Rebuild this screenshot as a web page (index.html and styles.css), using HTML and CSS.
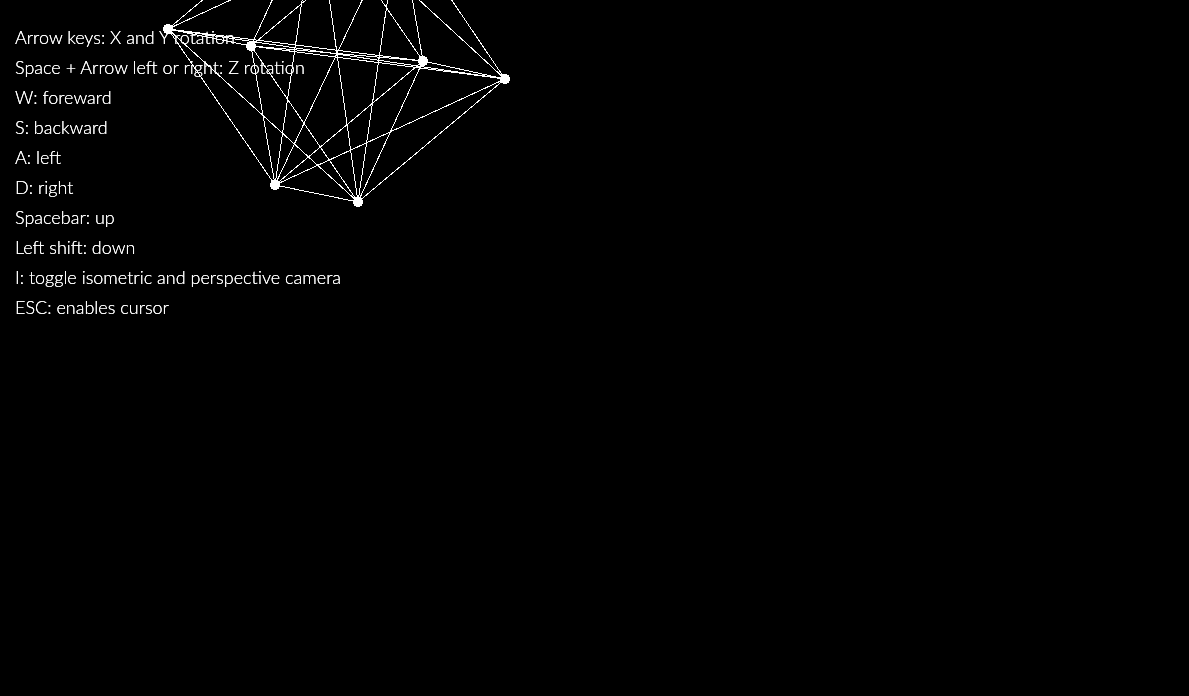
FILE: index.html
```html
<!DOCTYPE html>
<html lang="en">
<head>
<meta charset="utf-8">
<title>Polytope viewer</title>
<link rel="stylesheet" href="styles.css">
</head>
<body>
<main class="viewer">
  <svg class="scene" aria-hidden="true">
    <path class="edges" d="M168 29L251 46M168 29L423 61M168 29L505 79M168 29L275 185M168 29L358 202M168 29L316 -95M168 29L399 -78
      M251 46L423 61M251 46L505 79M251 46L275 185M251 46L358 202M251 46L316 -95M251 46L399 -78
      M423 61L505 79M423 61L275 185M423 61L358 202M423 61L316 -95M423 61L399 -78
      M505 79L275 185M505 79L358 202M505 79L316 -95M505 79L399 -78
      M275 185L358 202M275 185L316 -95M275 185L399 -78
      M358 202L316 -95M358 202L399 -78M316 -95L399 -78"/>
    <g class="vertices">
      <circle cx="168" cy="29" r="5"/>
      <circle cx="251" cy="46" r="5"/>
      <circle cx="423" cy="61" r="5"/>
      <circle cx="505" cy="79" r="5"/>
      <circle cx="275" cy="185" r="5"/>
      <circle cx="358" cy="202" r="5"/>
    </g>
  </svg>
  <ul class="help">
    <li>Arrow keys: X and Y rotation</li>
    <li>Space + Arrow left or right: Z rotation</li>
    <li>W: foreward</li>
    <li>S: backward</li>
    <li>A: left</li>
    <li>D: right</li>
    <li>Spacebar: up</li>
    <li>Left shift: down</li>
    <li>I: toggle isometric and perspective camera</li>
    <li>ESC: enables cursor</li>
  </ul>
</main>
</body>
</html>
```
FILE: styles.css
```css
body {
  margin: 0;
  background: #000;
  color: #fff;
  font-family: Lato, Carlito, sans-serif;
  font-size: 18px;
  font-weight: 300;
  line-height: 30px;
}

.viewer {
  position: relative;
  min-height: 100vh;
  overflow: hidden;
}

.scene {
  position: absolute;
  inset: 0;
  width: 100%;
  height: 100%;
  shape-rendering: crispEdges;
}

.edges {
  fill: none;
  stroke: #fff;
  stroke-width: 1px;
}

.vertices {
  fill: #fff;
}

.help {
  position: relative;
  margin: 0;
  padding: 22px 15px;
  list-style: none;
  text-shadow: 0 0 0 #fff;
  will-change: transform;
}
```
